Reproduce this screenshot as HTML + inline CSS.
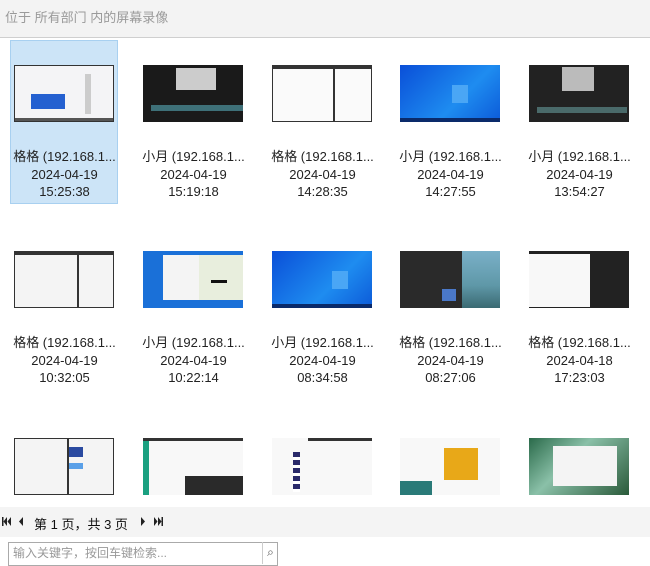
<!DOCTYPE html>
<html><head><meta charset="utf-8"><style>
*{margin:0;padding:0;box-sizing:border-box}
body{width:650px;height:561px;overflow:hidden;background:#fff;font-family:"Liberation Sans","Noto Sans CJK SC",sans-serif;position:relative}
.hdr{position:absolute;left:0;top:0;width:650px;height:38px;background:#f3f3f3;border-bottom:1px solid #cfcfcf;color:#9a9a9a;font-size:13px;line-height:36px;padding-left:5px}
.sel{position:absolute;left:10px;top:40px;width:108px;height:164px;background:#cce4f7;border:1px solid #a8d0f0}
.t{position:absolute;width:100px;height:57px;overflow:hidden}
.t div{position:absolute}
.lab{position:absolute;width:129px;text-align:center;font-size:13px;color:#222;line-height:17.5px}
.pg{position:absolute;left:0;top:507px;width:650px;height:30px;background:#f4f4f4;font-size:13px;color:#111}
.pg svg{position:absolute;top:10px}
.srch{position:absolute;left:8px;top:542px;width:270px;height:24px;border:1px solid #aaa;background:#fff;font-size:12px;color:#999;line-height:20px;padding-left:4px}
</style></head><body>
<div class="hdr">位于 所有部门 内的屏幕录像</div>
<div class="sel"></div>

<div class="t" style="left:14px;top:65px;background:#f4f4f6;border:1px solid #333">
 <div style="left:16px;top:28px;width:34px;height:15px;background:#2460d0"></div>
 <div style="left:70px;top:8px;width:6px;height:40px;background:#ccc"></div>
 <div style="left:0;top:52px;width:100px;height:4px;background:#555"></div></div>
<div class="t" style="left:143px;top:65px;background:#1a1a1a">
 <div style="left:33px;top:3px;width:40px;height:22px;background:#ccc"></div>
 <div style="left:8px;top:40px;width:92px;height:6px;background:#3e7078"></div></div>
<div class="t" style="left:272px;top:65px;background:#fafafa;border:1px solid #333">
 <div style="left:60px;top:0;width:2px;height:57px;background:#333"></div>
 <div style="left:0;top:0;width:100px;height:3px;background:#333"></div></div>
<div class="t" style="left:400px;top:65px;background:linear-gradient(135deg,#0a4fd8,#1e8cf0 60%,#0c5ad8)">
 <div style="left:52px;top:20px;width:16px;height:18px;background:#4aa6f5"></div>
 <div style="left:0;top:53px;width:100px;height:4px;background:#0a2a6a"></div></div>
<div class="t" style="left:529px;top:65px;background:#222">
 <div style="left:33px;top:2px;width:32px;height:24px;background:#bbb"></div>
 <div style="left:8px;top:42px;width:90px;height:6px;background:#4a6a6a"></div></div>

<div class="lab" style="left:0;top:148px">格格 (192.168.1...<br>2024-04-19<br>15:25:38</div>
<div class="lab" style="left:129px;top:148px">小月 (192.168.1...<br>2024-04-19<br>15:19:18</div>
<div class="lab" style="left:258px;top:148px">格格 (192.168.1...<br>2024-04-19<br>14:28:35</div>
<div class="lab" style="left:386px;top:148px">小月 (192.168.1...<br>2024-04-19<br>14:27:55</div>
<div class="lab" style="left:515px;top:148px">小月 (192.168.1...<br>2024-04-19<br>13:54:27</div>

<div class="t" style="left:14px;top:251px;background:#f4f4f4;border:1px solid #333">
 <div style="left:62px;top:0;width:2px;height:57px;background:#333"></div>
 <div style="left:0;top:0;width:100px;height:3px;background:#333"></div></div>
<div class="t" style="left:143px;top:251px;background:#1a70d8">
 <div style="left:20px;top:4px;width:80px;height:45px;background:#e8eedd"></div>
 <div style="left:20px;top:4px;width:36px;height:45px;background:#f4f4f4"></div>
 <div style="left:68px;top:29px;width:16px;height:3px;background:#111"></div></div>
<div class="t" style="left:272px;top:251px;background:linear-gradient(135deg,#0a4fd8,#1e8cf0 60%,#0c5ad8)">
 <div style="left:60px;top:20px;width:16px;height:18px;background:#4aa6f5"></div>
 <div style="left:0;top:53px;width:100px;height:4px;background:#0a2a6a"></div></div>
<div class="t" style="left:400px;top:251px;background:linear-gradient(#7ab0c8,#5f98a8 60%,#3a6a72)">
 <div style="left:0;top:0;width:62px;height:57px;background:#2a2a2a"></div>
 <div style="left:42px;top:38px;width:14px;height:12px;background:#4a78c8"></div></div>
<div class="t" style="left:529px;top:251px;background:#222">
 <div style="left:0;top:3px;width:61px;height:53px;background:#f8f8f8"></div></div>

<div class="lab" style="left:0;top:334px">格格 (192.168.1...<br>2024-04-19<br>10:32:05</div>
<div class="lab" style="left:129px;top:334px">小月 (192.168.1...<br>2024-04-19<br>10:22:14</div>
<div class="lab" style="left:258px;top:334px">小月 (192.168.1...<br>2024-04-19<br>08:34:58</div>
<div class="lab" style="left:386px;top:334px">格格 (192.168.1...<br>2024-04-19<br>08:27:06</div>
<div class="lab" style="left:515px;top:334px">格格 (192.168.1...<br>2024-04-18<br>17:23:03</div>

<div class="t" style="left:14px;top:438px;background:#f4f4f4;border:1px solid #333">
 <div style="left:52px;top:0;width:2px;height:57px;background:#333"></div>
 <div style="left:54px;top:8px;width:14px;height:10px;background:#2a4aa0"></div>
 <div style="left:54px;top:24px;width:14px;height:6px;background:#5aa0e8"></div></div>
<div class="t" style="left:143px;top:438px;background:#f8f8f8">
 <div style="left:0;top:0;width:100px;height:3px;background:#333"></div>
 <div style="left:0;top:3px;width:6px;height:54px;background:#1aa080"></div>
 <div style="left:42px;top:38px;width:58px;height:19px;background:#2a2a2a"></div></div>
<div class="t" style="left:272px;top:438px;background:#f8f8f8">
 <div style="left:36px;top:0;width:64px;height:3px;background:#333"></div>
 <div style="left:21px;top:14px;width:7px;height:40px;background:repeating-linear-gradient(#2a2a6a 0 5px,#fff 5px 8px)"></div></div>
<div class="t" style="left:400px;top:438px;background:#f8f8f8">
 <div style="left:44px;top:10px;width:34px;height:32px;background:#e8a818"></div>
 <div style="left:0;top:43px;width:32px;height:14px;background:#2a7a78"></div></div>
<div class="t" style="left:529px;top:438px;background:linear-gradient(135deg,#2a6a4a,#8ac0a8 40%,#2a5a3a)">
 <div style="left:24px;top:8px;width:64px;height:40px;background:#f4f4f4"></div></div>

<div class="pg">
 <svg style="left:2px" width="10" height="9"><rect x="0" y="0" width="1.5" height="9" fill="#222"/><path d="M5 0L1.5 4.5L5 9ZM9 0L5.5 4.5L9 9Z" fill="#222"/></svg>
 <svg style="left:18px" width="6" height="9"><path d="M5 0L1 4.5L5 9Z" fill="#222"/></svg>
 <span style="position:absolute;left:34px;top:7px;font-size:13px">第 1 页，共 3 页</span>
 <svg style="left:140px" width="6" height="9"><path d="M1 0L5 4.5L1 9Z" fill="#222"/></svg>
 <svg style="left:153px" width="10" height="9"><path d="M1 0L4.5 4.5L1 9ZM5 0L8.5 4.5L5 9Z" fill="#222"/><rect x="8.5" y="0" width="1.5" height="9" fill="#222"/></svg>
</div>
<div class="srch">输入关键字，按回车键检索...
 <span style="position:absolute;left:253px;top:-1px;width:16px;height:22px;border-left:1px solid #ccc;font-size:12px;color:#555;text-align:center">⌕</span></div>
</body></html>
